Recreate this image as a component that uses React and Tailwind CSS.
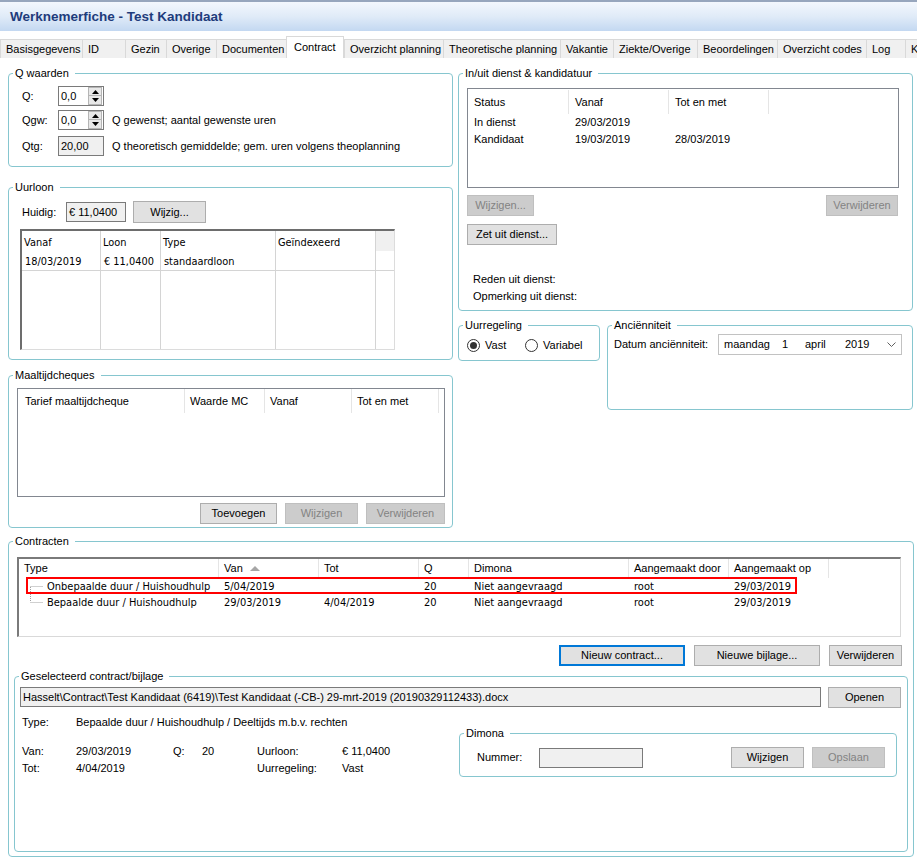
import React from "react";

const V = "font-['DejaVu_Sans',Verdana,sans-serif]";

const Btn = ({ children, className = "", disabled, focused }) => (
  <div
    className={`h-[21px] flex items-center justify-center shrink-0 whitespace-nowrap ${
      focused
        ? "border-2 border-[#0078d7] bg-[#e1e1e1]"
        : disabled
        ? "border border-[#bfbfbf] bg-[#cccccc] text-[#838383]"
        : "border border-[#adadad] bg-[#e1e1e1]"
    } ${className}`}
  >
    {children}
  </div>
);

const Group = ({ title, className = "", children }) => (
  <fieldset className={`border border-[#86c6cf] rounded-[4px] min-w-0 ${className}`}>
    <legend className="ml-[4px] pl-[2px] pr-[6px] leading-[13px] h-[13px] whitespace-nowrap">{title}</legend>
    {children}
  </fieldset>
);

const Tri = ({ down }) => (
  <svg width="7" height="4" viewBox="0 0 7 4">
    <path d={down ? "M0 0 L7 0 L3.5 4Z" : "M0 4 L3.5 0 L7 4Z"} fill="#000" />
  </svg>
);

const Spin = ({ value }) => (
  <div className="w-[46px] h-[20px] border border-[#7a7a7a] bg-white flex items-center pl-[2px] shrink-0">
    <span className="flex-1">{value}</span>
    <div className="w-[14px] h-[18px] mr-[1px] flex flex-col">
      <div className="h-[9px] bg-[#e8e8e8] border border-[#b5b5b5] flex items-center justify-center">
        <Tri />
      </div>
      <div className="h-[9px] bg-[#e8e8e8] border border-[#b5b5b5] border-t-0 flex items-center justify-center">
        <Tri down />
      </div>
    </div>
  </div>
);

const Radio = ({ checked }) => (
  <span className="w-[13px] h-[13px] rounded-full border border-[#333333] bg-white flex items-center justify-center shrink-0">
    {checked && <span className="w-[7px] h-[7px] rounded-full bg-[#333333]" />}
  </span>
);

const tabs = [
  ["Basisgegevens", "w-[82px]"],
  ["ID", "w-[43px]"],
  ["Gezin", "w-[41px]"],
  ["Overige", "w-[50px]"],
  ["Documenten", "w-[70px]"],
  ["Contract", "w-[58px]", true],
  ["Overzicht planning", "w-[99px]"],
  ["Theoretische planning", "w-[117px]"],
  ["Vakantie", "w-[53px]"],
  ["Ziekte/Overige", "w-[84px]"],
  ["Beoordelingen", "w-[80px]"],
  ["Overzicht codes", "w-[89px]"],
  ["Log", "w-[39px]"],
  ["K", "w-[30px]"],
];

const TreeLine = ({ first }) => (
  <svg width="28" height="16" viewBox="0 0 28 16" className="shrink-0">
    {first ? (
      <>
        <line x1="11.5" y1="8.5" x2="24" y2="8.5" stroke="#a0a0a0" strokeDasharray="1 1" />
        <line x1="11.5" y1="9" x2="11.5" y2="16" stroke="#a0a0a0" strokeDasharray="1 1" />
      </>
    ) : (
      <>
        <line x1="11.5" y1="0" x2="11.5" y2="8" stroke="#a0a0a0" strokeDasharray="1 1" />
        <line x1="11.5" y1="8.5" x2="24" y2="8.5" stroke="#a0a0a0" strokeDasharray="1 1" />
      </>
    )}
  </svg>
);

export default function App() {
  const ulCols = [
    ["Vanaf", "18/03/2019", "w-[79px]"],
    ["Loon", "€ 11,0400", "w-[60px]"],
    ["Type", "standaardloon", "w-[115px]"],
    ["Geïndexeerd", "", "w-[100px]"],
  ];
  const cCols = [
    ["Type", "w-[200px]"],
    ["Van", "w-[100px]"],
    ["Tot", "w-[100px]"],
    ["Q", "w-[50px]"],
    ["Dimona", "w-[160px]"],
    ["Aangemaakt door", "w-[100px]"],
    ["Aangemaakt op", "w-[100px]"],
  ];
  const cRows = [
    ["Onbepaalde duur / Huishoudhulp", "5/04/2019", "", "20", "Niet aangevraagd", "root", "29/03/2019"],
    ["Bepaalde duur / Huishoudhulp", "29/03/2019", "4/04/2019", "20", "Niet aangevraagd", "root", "29/03/2019"],
  ];

  return (
    <div className="w-[917px] h-[863px] overflow-hidden bg-white text-black font-['Liberation_Sans',Arial,sans-serif] text-[11px] leading-[13px]">
      {/* Title bar */}
      <div className="h-[31px] border-t-2 border-[#97a6bd] bg-linear-to-b from-[#f3f7fd] via-[#e0ebf8] to-[#c3d8f1] flex items-center pl-[10px]">
        <span className="font-bold text-[13.5px] text-[#1f3c7c] leading-[16px]">Werknemerfiche - Test Kandidaat</span>
      </div>

      {/* Tabs */}
      <div className="mt-[5px] h-[22px] flex items-end whitespace-nowrap">
        {tabs.map(([t, w, sel]) =>
          sel ? (
            <div key={t} className={`${w} h-[22px] shrink-0 bg-white border-l border-t border-r border-[#d9d9d9] pl-[7px] pt-[4px]`}>
              {t}
            </div>
          ) : (
            <div key={t} className={`${w} h-[19px] shrink-0 bg-[#f0f0f0] border-l border-t border-[#d9d9d9] pl-[5px] pt-[3px]`}>
              {t}
            </div>
          )
        )}
      </div>

      {/* Upper area */}
      <div className="flex mt-[9px] pl-[8px] gap-[5px]">
        {/* Left column */}
        <div className="w-[445px] flex flex-col shrink-0">
          <Group title="Q waarden" className="h-[100px]">
            <div className="pl-[13px] pt-[6px]">
              <div className="flex items-center h-[20px]">
                <span className="w-[36px]">Q:</span>
                <Spin value="0,0" />
              </div>
              <div className="flex items-center h-[20px] mt-[4px]">
                <span className="w-[36px]">Qgw:</span>
                <Spin value="0,0" />
                <span className="ml-[8px]">Q gewenst; aantal gewenste uren</span>
              </div>
              <div className="flex items-center h-[20px] mt-[6px]">
                <span className="w-[36px]">Qtg:</span>
                <div className="w-[46px] h-[20px] border border-[#7a7a7a] bg-[#f0f0f0] flex items-center pl-[2px]">20,00</div>
                <span className="ml-[8px]">Q theoretisch gemiddelde; gem. uren volgens theoplanning</span>
              </div>
            </div>
          </Group>

          <Group title="Uurloon" className="h-[179px] mt-[14px]">
            <div className="pl-[11px] pt-[7px]">
              <div className="flex items-center h-[22px] pl-[2px]">
                <span className="w-[44px]">Huidig:</span>
                <div className="w-[60px] h-[20px] border border-[#7a7a7a] bg-[#f0f0f0] flex items-center pl-[2px]">€ 11,0400</div>
                <Btn className="w-[73px] h-[22px] ml-[7px]">Wijzig...</Btn>
              </div>
              <div className={`mt-[6px] w-[375px] h-[121px] border-l-2 border-t-2 border-l-[#6d6d6d] border-t-[#6d6d6d] border-r border-b border-r-[#dcdcdc] border-b-[#dcdcdc] flex ${V} text-[9.8px]`}>
                {ulCols.map(([h, d, w]) => (
                  <div key={h} className={`${w} border-r border-[#d4d4d4] flex flex-col shrink-0`}>
                    <div className="h-[22px] flex items-center pl-[2px]">{h}</div>
                    <div className="h-[18px] border-b border-[#d4d4d4] flex items-center pl-[3px] whitespace-nowrap">{d}</div>
                  </div>
                ))}
                <div className="flex-1 flex flex-col">
                  <div className="h-[20px] bg-[#f0f0f0]" />
                  <div className="h-[20px] border-b border-[#d4d4d4]" />
                </div>
              </div>
            </div>
          </Group>

          <Group title="Maaltijdcheques" className="h-[159px] mt-[9px]">
            <div className="pl-[8px] pt-[6px]">
              <div className="w-[428px] h-[109px] border border-[#828790] flex flex-col">
                <div className="h-[24px] flex">
                  <div className="w-[167px] border-r border-[#e5e5e5] pl-[7px] pt-[1px] flex items-center">Tarief maaltijdcheque</div>
                  <div className="w-[80px] border-r border-[#e5e5e5] pl-[5px] pt-[1px] flex items-center">Waarde MC</div>
                  <div className="w-[87px] border-r border-[#e5e5e5] pl-[5px] pt-[1px] flex items-center">Vanaf</div>
                  <div className="w-[87px] border-r border-[#e5e5e5] pl-[5px] pt-[1px] flex items-center">Tot en met</div>
                </div>
              </div>
              <div className="flex justify-end gap-[8px] mt-[6px] pr-[7px]">
                <Btn className="w-[77px]">Toevoegen</Btn>
                <Btn className="w-[73px]" disabled>Wijzigen</Btn>
                <Btn className="w-[79px]" disabled>Verwijderen</Btn>
              </div>
            </div>
          </Group>
        </div>

        {/* Right column */}
        <div className="w-[455px] flex flex-col shrink-0">
          <Group title="In/uit dienst & kandidatuur" className="h-[244px]">
            <div className="pl-[8px] pt-[8px]">
              <div className="w-[432px] h-[100px] border border-[#828790] flex flex-col">
                <div className="h-[25px] pt-[1px] flex">
                  <div className="w-[101px] border-r border-[#e5e5e5] pl-[6px] flex items-center">Status</div>
                  <div className="w-[100px] border-r border-[#e5e5e5] pl-[6px] flex items-center">Vanaf</div>
                  <div className="w-[100px] border-r border-[#e5e5e5] pl-[6px] flex items-center">Tot en met</div>
                </div>
                {[
                  ["In dienst", "29/03/2019", ""],
                  ["Kandidaat", "19/03/2019", "28/03/2019"],
                ].map((r) => (
                  <div key={r[0]} className="h-[17px] flex items-center">
                    <div className="w-[101px] pl-[6px]">{r[0]}</div>
                    <div className="w-[100px] pl-[6px]">{r[1]}</div>
                    <div className="w-[100px] pl-[6px]">{r[2]}</div>
                  </div>
                ))}
              </div>
              <div className="w-[431px] flex justify-between mt-[7px]">
                <Btn className="w-[67px]" disabled>Wijzigen...</Btn>
                <Btn className="w-[72px]" disabled>Verwijderen</Btn>
              </div>
              <Btn className="w-[90px] mt-[8px]">Zet uit dienst...</Btn>
              <div className="mt-[26px] pl-[6px] leading-[17px]">
                <div>Reden uit dienst:</div>
                <div>Opmerking uit dienst:</div>
              </div>
            </div>
          </Group>

          <div className="flex mt-[8px] gap-[7px] items-start">
            <Group title="Uurregeling" className="w-[142px] h-[42px] shrink-0">
              <div className="flex items-center h-[13px] mt-[7px] pl-[8px]">
                <div className="w-[58px] flex items-center">
                  <Radio checked />
                  <span className="ml-[5px]">Vast</span>
                </div>
                <Radio />
                <span className="ml-[5px]">Variabel</span>
              </div>
            </Group>
            <Group title="Anciënniteit" className="w-[306px] h-[91px] shrink-0">
              <div className="flex items-center mt-[2px] pl-[6px]">
                <span className="w-[104px] shrink-0">Datum anciënniteit:</span>
                <div className="w-[184px] h-[21px] border border-[#c2c2c2] bg-white flex items-center pl-[5px] shrink-0">
                  <span className="w-[58px]">maandag</span>
                  <span className="w-[23px]">1</span>
                  <span className="w-[40px]">april</span>
                  <span>2019</span>
                  <svg width="9" height="5" viewBox="0 0 9 5" className="ml-auto mr-[5px]">
                    <path d="M0.5 0.5 L4.5 4.5 L8.5 0.5" fill="none" stroke="#606060" strokeWidth="1" />
                  </svg>
                </div>
              </div>
            </Group>
          </div>
        </div>
      </div>

      {/* Contracten */}
      <Group title="Contracten" className="ml-[8px] mt-[7px] w-[906px] h-[322px]">
        <div className="pl-[8px] pt-[9px]">
          <div className="relative w-[884px] h-[80px] border-l-2 border-t-2 border-l-[#7a7a7a] border-t-[#7a7a7a] border-r border-b border-r-[#d9d9d9] border-b-[#d9d9d9]">
            <div className="h-[19px] flex">
              {cCols.map(([h, w]) => (
                <div key={h} className={`${w} shrink-0 border-r border-[#e5e5e5] pl-[5px] flex items-center`}>
                  {h}
                  {h === "Van" && (
                    <svg width="10" height="5" viewBox="0 0 10 5" className="ml-[7px]">
                      <path d="M0 5 L5 0 L10 5Z" fill="#a6a6a6" />
                    </svg>
                  )}
                </div>
              ))}
            </div>
            <div className={`${V} text-[9.9px]`}>
              {cRows.map((r, i) => (
                <div key={i} className="h-[16px] flex items-center whitespace-nowrap">
                  <div className="w-[200px] shrink-0 flex items-center">
                    <TreeLine first={i === 0} />
                    <span>{r[0]}</span>
                  </div>
                  <div className="w-[100px] shrink-0 pl-[5px]">{r[1]}</div>
                  <div className="w-[100px] shrink-0 pl-[5px]">{r[2]}</div>
                  <div className="w-[50px] shrink-0 pl-[5px]">{r[3]}</div>
                  <div className="w-[160px] shrink-0 pl-[5px]">{r[4]}</div>
                  <div className="w-[100px] shrink-0 pl-[5px]">{r[5]}</div>
                  <div className="w-[100px] shrink-0 pl-[5px]">{r[6]}</div>
                </div>
              ))}
            </div>
            <div className="absolute left-[7px] top-[18px] w-[771px] h-[17px] border-2 border-[#ff0000]" />
          </div>
          <div className="flex justify-end gap-[9px] mt-[8px] pr-[11px]">
            <Btn className="w-[126px]" focused>Nieuw contract...</Btn>
            <Btn className="w-[126px]">Nieuwe bijlage...</Btn>
            <Btn className="w-[73px]">Verwijderen</Btn>
          </div>
        </div>

        <Group title="Geselecteerd contract/bijlage" className="ml-[5px] mt-[4px] w-[894px] h-[182px]">
          <div className="flex items-start gap-[7px] pl-[5px] mt-[4px]">
            <div className="w-[801px] h-[20px] border border-[#7a7a7a] bg-[#f0f0f0] flex items-center pl-[2px] whitespace-nowrap overflow-hidden">
              Hasselt\Contract\Test Kandidaat (6419)\Test Kandidaat (-CB-) 29-mrt-2019 (20190329112433).docx
            </div>
            <Btn className="w-[73px]">Openen</Btn>
          </div>
          <div className="mt-[8px] pl-[7px] flex items-center h-[13px]">
            <span className="w-[54px]">Type:</span>
            <span>Bepaalde duur / Huishoudhulp / Deeltijds m.b.v. rechten</span>
          </div>
          <div className="flex -mt-[2px] items-start">
            <div className="pl-[7px] pt-[16px] leading-[17px]">
              <div className="flex">
                <span className="w-[54px]">Van:</span>
                <span className="w-[97px]">29/03/2019</span>
                <span className="w-[29px]">Q:</span>
                <span className="w-[55px]">20</span>
                <span className="w-[85px]">Uurloon:</span>
                <span>€ 11,0400</span>
              </div>
              <div className="flex">
                <span className="w-[54px]">Tot:</span>
                <span className="w-[181px]">4/04/2019</span>
                <span className="w-[85px]">Uurregeling:</span>
                <span>Vast</span>
              </div>
            </div>
            <Group title="Dimona" className="ml-auto mr-[10px] w-[438px] h-[50px] shrink-0">
              <div className="flex items-center mt-[7px] pl-[17px] pr-[11px]">
                <span className="w-[62px]">Nummer:</span>
                <div className="w-[104px] h-[20px] border border-[#7a7a7a] bg-[#f0f0f0]" />
                <Btn className="w-[73px] ml-auto">Wijzigen</Btn>
                <Btn className="w-[73px] ml-[8px]" disabled>Opslaan</Btn>
              </div>
            </Group>
          </div>
        </Group>
      </Group>
    </div>
  );
}
